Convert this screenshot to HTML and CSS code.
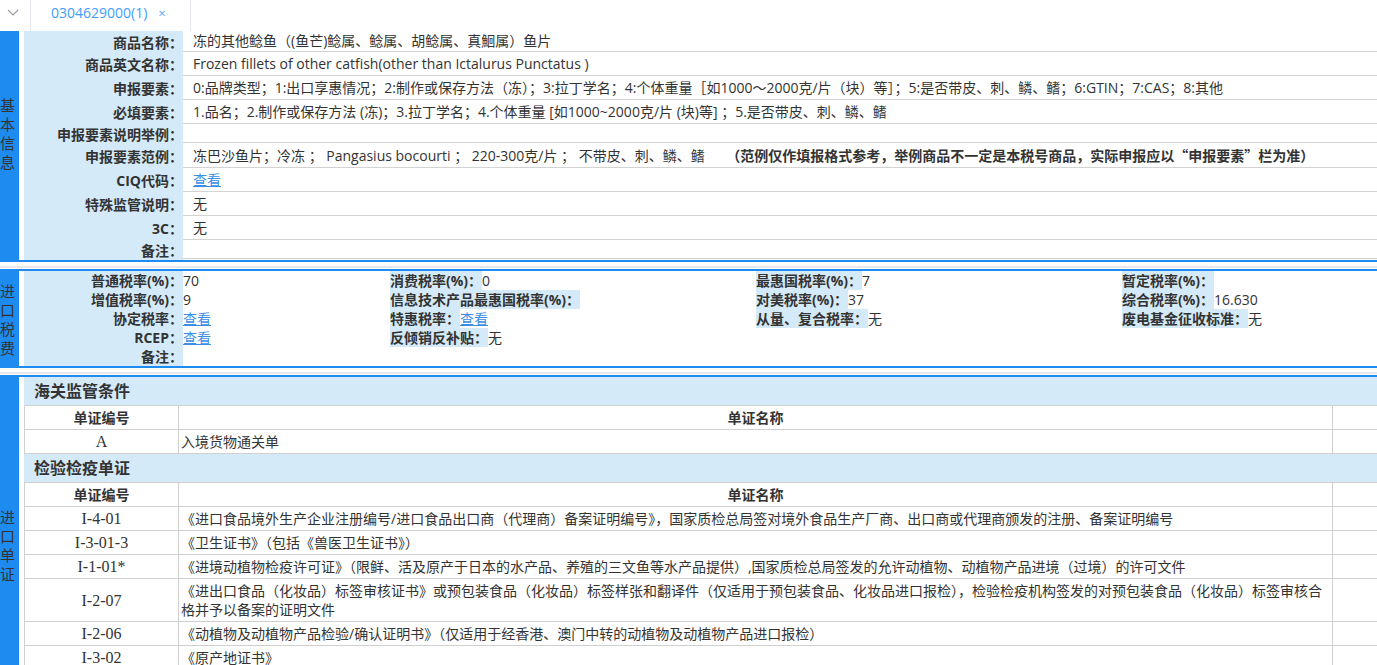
FILE: index.html
```html
<!DOCTYPE html>
<html lang="zh-CN">
<head>
<meta charset="utf-8">
<title>0304629000</title>
<link rel="stylesheet" href="styles.css">
</head>
<body>
<div class="tabbar">
  <div class="tab-toggle">
    <svg width="12" height="7" viewBox="0 0 12 7"><polyline points="1,1 6,6 11,1" fill="none" stroke="#9b9b9b" stroke-width="1.1"/></svg>
  </div>
  <div class="tab"><span class="tab-title">0304629000(1)</span><span class="tab-close">×</span></div>
</div>

<section class="sec sec-basic">
  <div class="side"><div class="side-text">基<br>本<br>信<br>息</div></div>
  <div class="main kv">
    <div class="k first">商品名称：</div><div class="v first">冻的其他鲶鱼（(鱼芒)鲶属、鲶属、胡鲶属、真鮰属）鱼片</div>
    <div class="k">商品英文名称：</div><div class="v">Frozen fillets of other catfish(other than Ictalurus Punctatus )</div>
    <div class="k">申报要素：</div><div class="v">0:品牌类型；1:出口享惠情况；2:制作或保存方法（冻）；3:拉丁学名；4:个体重量［如1000～2000克/片（块）等］；5:是否带皮、刺、鳞、鳍；6:GTIN；7:CAS；8:其他</div>
    <div class="k">必填要素：</div><div class="v">1.品名；2.制作或保存方法 (冻)；3.拉丁学名；4.个体重量 [如1000~2000克/片 (块)等] ；5.是否带皮、刺、鳞、鳍</div>
    <div class="k short">申报要素说明举例：</div><div class="v short"></div>
    <div class="k">申报要素范例：</div><div class="v">冻巴沙鱼片；冷冻 ； Pangasius bocourti ； 220-300克/片 ； 不带皮、刺、鳞、鳍 <b class="note">（范例仅作填报格式参考，举例商品不一定是本税号商品，实际申报应以<span class="cjk">“</span>申报要素<span class="cjk">”</span>栏为准）</b></div>
    <div class="k">CIQ代码：</div><div class="v"><a class="link" href="#">查看</a></div>
    <div class="k">特殊监管说明：</div><div class="v">无</div>
    <div class="k">3C：</div><div class="v">无</div>
    <div class="k short">备注：</div><div class="v short"></div>
  </div>
</section>
<div class="gap"></div>

<section class="sec sec-tax">
  <div class="side center"><div class="side-text">进<br>口<br>税<br>费</div></div>
  <div class="main tax">
    <div class="tc c1"><span class="tk">普通税率(%)：</span><span class="tv">70</span></div>
    <div class="tc"><span class="tk">消费税率(%)：</span><span class="tv">0</span></div>
    <div class="tc"><span class="tk">最惠国税率(%)：</span><span class="tv">7</span></div>
    <div class="tc"><span class="tk">暂定税率(%)：</span><span class="tv"></span></div>

    <div class="tc c1"><span class="tk">增值税率(%)：</span><span class="tv">9</span></div>
    <div class="tc"><span class="tk">信息技术产品最惠国税率(%)：</span><span class="tv"></span></div>
    <div class="tc"><span class="tk">对美税率(%)：</span><span class="tv">37</span></div>
    <div class="tc"><span class="tk">综合税率(%)：</span><span class="tv">16.630</span></div>

    <div class="tc c1"><span class="tk">协定税率：</span><span class="tv"><a class="link" href="#">查看</a></span></div>
    <div class="tc"><span class="tk">特惠税率：</span><span class="tv"><a class="link" href="#">查看</a></span></div>
    <div class="tc"><span class="tk">从量、复合税率：</span><span class="tv">无</span></div>
    <div class="tc"><span class="tk">废电基金征收标准：</span><span class="tv">无</span></div>

    <div class="tc c1"><span class="tk">RCEP：</span><span class="tv"><a class="link" href="#">查看</a></span></div>
    <div class="tc"><span class="tk">反倾销反补贴：</span><span class="tv">无</span></div>
    <div class="tc"></div>
    <div class="tc"></div>

    <div class="tc c1"><span class="tk">备注：</span><span class="tv"></span></div>
    <div class="tc"></div>
    <div class="tc"></div>
    <div class="tc"></div>
  </div>
</section>
<div class="gap"></div>

<section class="sec sec-docs">
  <div class="side"><div class="side-text docs-text">进<br>口<br>单<br>证</div></div>
  <div class="main">
    <div class="group-title">海关监管条件</div>
    <div class="dt">
      <div class="th">单证编号</div><div class="th">单证名称</div><div class="te"></div>
      <div class="code">A</div><div class="name">入境货物通关单</div><div class="te"></div>
    </div>
    <div class="group-title">检验检疫单证</div>
    <div class="dt">
      <div class="th">单证编号</div><div class="th">单证名称</div><div class="te"></div>
      <div class="code">I-4-01</div><div class="name">《进口食品境外生产企业注册编号/进口食品出口商（代理商）备案证明编号》，国家质检总局签对境外食品生产厂商、出口商或代理商颁发的注册、备案证明编号</div><div class="te"></div>
      <div class="code">I-3-01-3</div><div class="name">《卫生证书》（包括《兽医卫生证书》）</div><div class="te"></div>
      <div class="code">I-1-01*</div><div class="name">《进境动植物检疫许可证》（限鲜、活及原产于日本的水产品、养殖的三文鱼等水产品提供）,国家质检总局签发的允许动植物、动植物产品进境（过境）的许可文件</div><div class="te"></div>
      <div class="code">I-2-07</div><div class="name">《进出口食品（化妆品）标签审核证书》或预包装食品（化妆品）标签样张和翻译件（仅适用于预包装食品、化妆品进口报检），检验检疫机构签发的对预包装食品（化妆品）标签审核合格并予以备案的证明文件</div><div class="te"></div>
      <div class="code">I-2-06</div><div class="name">《动植物及动植物产品检验/确认证明书》（仅适用于经香港、澳门中转的动植物及动植物产品进口报检）</div><div class="te"></div>
      <div class="code">I-3-02</div><div class="name">《原产地证书》</div><div class="te"></div>
    </div>
  </div>
</section>
</body>
</html>
```

FILE: styles.css
```css
* { box-sizing: border-box; margin: 0; padding: 0; }
html, body { background: #fff; }
body {
  width: 1377px;
  height: 665px;
  overflow: hidden;
  font-family: "Open Sans", "Noto Sans CJK SC", sans-serif;
  font-size: 14px;
  color: #333;
}
.cjk { font-family: "Noto Sans CJK SC", sans-serif; }

/* tab bar */
.tabbar { display: flex; height: 31px; background: #fff; }
.tab-toggle {
  width: 31px;
  border-right: 1px solid #e4e7ed;
  padding: 9px 0 0 7px;
}
.tab-toggle svg { display: block; }
.tab {
  width: 160px;
  border-right: 1px solid #e4e7ed;
  display: flex;
  align-items: center;
  padding-left: 20px;
  padding-bottom: 6px;
}
.tab-title { color: #409eff; font-size: 14px; }
.tab-close { color: #5aa7f5; font-size: 13px; margin-left: 11px; }

/* sections */
.sec { display: flex; }
.side { width: 19px; flex: none; background: #1e8bf0; }
.side.center { display: flex; align-items: center; }
.side-text {
  width: 16px;
  font-family: "Noto Sans CJK SC", sans-serif;
  font-size: 15px;
  line-height: 19px;
  color: #333;
}
.sec-basic .side-text { padding-top: 64px; }
.docs-text { padding-top: 130px; }
.main { flex: 1; margin-left: 5px; min-width: 0; }

.sec-basic { border-bottom: 2px solid #1e8bf0; }
.sec-tax { border-top: 2px solid #1e8bf0; border-bottom: 2px solid #1e8bf0; }
.sec-docs { border-top: 2px solid #1e8bf0; min-height: 400px; }

.gap {
  height: 7px;
  border-top: 4px solid #fff;
  border-bottom: 1px solid #fff;
  background: #e8e8e8;
}

/* key-value rows */
.kv { display: grid; grid-template-columns: 159px 1fr; }
.k {
  background: #d4eaf8;
  font-weight: bold;
  text-align: right;
  display: flex;
  align-items: center;
  justify-content: flex-end;
}
.v {
  border-bottom: 1px solid #d3d3d3;
  padding-left: 10px;
  line-height: 23px;
  height: 24px;
  white-space: nowrap;
}
.v.first { height: 21px; line-height: 20px; }
.v.short { height: 19px; }
.note { font-weight: bold; margin-left: 18px; }
.link { color: #3b8ee6; text-decoration: underline; }

/* tax grid */
.tax { display: grid; grid-template-columns: 366px 366px 366px 366px; }
.tc { display: flex; height: 19px; line-height: 19px; white-space: nowrap; }
.tk { background: #d4eaf8; font-weight: bold; }
.c1 .tk { width: 159px; text-align: right; flex: none; }
.c1 { background: linear-gradient(#d4eaf8, #d4eaf8) 0 0 / 159px 100% no-repeat; }

/* documents */
.group-title {
  background: #d4eaf8;
  font-size: 16px;
  font-weight: bold;
  height: 29px;
  line-height: 28px;
  padding-left: 10px;
  border-bottom: 1px solid #cfcfcf;
}
.dt { display: grid; grid-template-columns: 155px 1154px 1fr; }
.dt > div {
  border-bottom: 1px solid #d0d0d0;
  border-right: 1px solid #d0d0d0;
  padding: 2px 0;
  line-height: 19px;
  min-height: 24px;
}
.dt > .th:first-child, .dt > .code { border-left: 1px solid #d0d0d0; }
.th { font-weight: bold; text-align: center; }
.code {
  display: flex;
  align-items: center;
  justify-content: center;
  font-family: "Liberation Serif", serif;
  font-size: 16px;
}
.dt > .name { padding-left: 2px; padding-right: 2px; }
.dt > .te { border-right: none; }
```
